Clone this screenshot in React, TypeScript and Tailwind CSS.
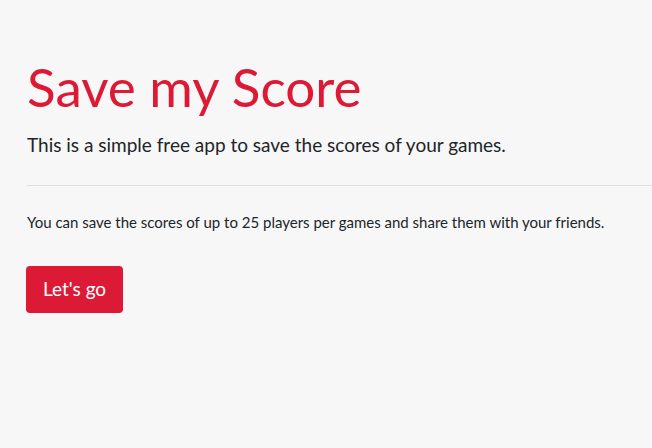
import React from "react";

const App = () => {
  return (
    <div
      className="min-h-[448px] w-[652px] overflow-hidden bg-[#f7f7f7] text-[#212529]"
      style={{ fontFamily: "Lato, 'Noto Sans', sans-serif" }}
    >
      <div className="pl-[27px] pt-[55px]">
        {/* title */}
        <h1 className="text-[53px] leading-[1.2] font-normal text-[#dc1a35]">
          Save my Score
        </h1>
        <p className="mt-[12px] text-[19px] leading-[1.5]">
          This is a simple free app to save the scores of your games.
        </p>
        <hr className="mt-[26px] mb-[25px] border-t border-[#e0e0e0]" />
        <p className="text-[15px] leading-[1.5]">
          You can save the scores of up to 25 players per games and share them
          with your friends.
        </p>
        <button className="mt-[32px] -ml-[1px] block h-[47px] rounded-[4px] bg-[#dc1a35] px-[17px] text-[19px] leading-[1.5] text-white">
          Let's go
        </button>
      </div>
    </div>
  );
};

export default App;
